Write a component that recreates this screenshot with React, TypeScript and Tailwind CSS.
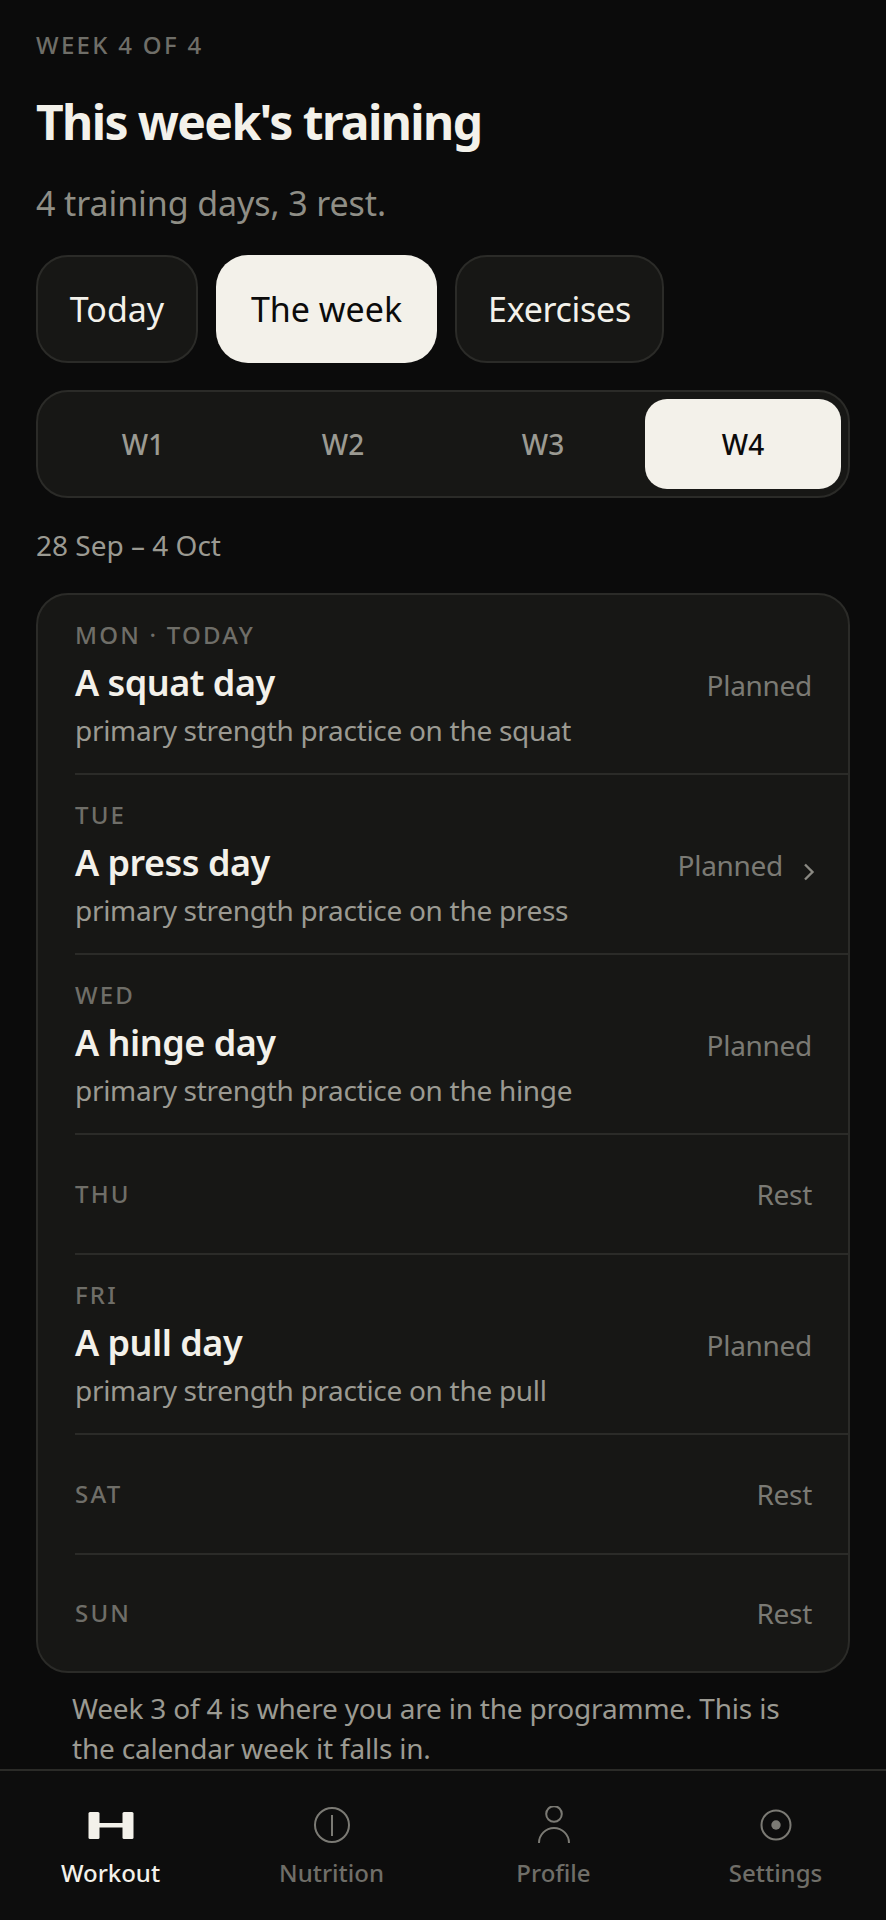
import { ReactNode } from "react";

type Day = { label: string; title?: string; desc?: string; status: string; chevron?: boolean };

const days: Day[] = [
  { label: "MON · TODAY", title: "A squat day", desc: "primary strength practice on the squat", status: "Planned" },
  { label: "TUE", title: "A press day", desc: "primary strength practice on the press", status: "Planned", chevron: true },
  { label: "WED", title: "A hinge day", desc: "primary strength practice on the hinge", status: "Planned" },
  { label: "THU", status: "Rest" },
  { label: "FRI", title: "A pull day", desc: "primary strength practice on the pull", status: "Planned" },
  { label: "SAT", status: "Rest" },
  { label: "SUN", status: "Rest" },
];

const DayRow = ({ day, last }: { day: Day; last: boolean }) => {
  const border = last ? "" : "border-b-2 border-[#2b2b28]";
  if (!day.title) {
    return (
      <div className={`ml-[37px] pr-[36px] flex items-center justify-between ${last ? "h-[116px]" : "h-[120px]"} ${border}`}>
        <span className="text-[24px] tracking-[2.2px] font-medium text-[#6f6e68]">{day.label}</span>
        <span className="text-[28px] tracking-[-0.3px] text-[#7b7a74]">{day.status}</span>
      </div>
    );
  }
  return (
    <div className={`ml-[37px] h-[180px] pr-[36px] pt-[24px] flex items-start justify-between ${border}`}>
      <div>
        <div className="text-[24px] leading-[32px] tracking-[2.2px] font-medium text-[#6f6e68]">{day.label}</div>
        <div className="text-[36px] leading-[48px] mt-[8px] tracking-[-0.5px] font-semibold text-[#f3f1ea]">{day.title}</div>
        <div className="text-[28px] leading-[38px] mt-[4px] tracking-[-0.3px] text-[#9b9a92]">{day.desc}</div>
      </div>
      <div className="flex items-center mt-[47px]">
        <span className="text-[28px] leading-[38px] tracking-[-0.3px] text-[#7b7a74]">{day.status}</span>
        {day.chevron && (
          <svg width="14" height="18" viewBox="0 0 14 18" className="ml-[19px] mr-[-4px] mt-[14px]" fill="none" stroke="#8a8982" strokeWidth="2.4">
            <path d="M3 1.5 L10.5 9 L3 16.5" />
          </svg>
        )}
      </div>
    </div>
  );
};

const NavItem = ({ label, active, icon, wide }: { label: string; active?: boolean; icon: ReactNode; wide?: boolean }) => (
  <div className={`flex flex-col items-center ${wide ? "w-[223px]" : "w-[221px]"}`}>
    <div className="h-[38px] flex items-center justify-center">{icon}</div>
    <span className={`mt-[13px] text-[24px] leading-[32px] font-medium ${active ? "text-[#f3f1ea]" : "text-[#6f6e68]"}`}>{label}</span>
  </div>
);

export default function App() {
  return (
    <div className="h-[1920px] w-[886px] overflow-hidden bg-[#0b0b0b] flex flex-col font-['Noto_Sans',sans-serif]">
      <div className="flex-1 overflow-hidden px-[36px]">
        <div className="mt-[28px] text-[24px] leading-[34px] tracking-[2.3px] font-medium text-[#6f6e68]">WEEK 4 OF 4</div>
        <h1 className="mt-[28px] text-[48px] leading-[64px] tracking-[-1.6px] font-bold text-[#f3f1ea]">This week's training</h1>
        <p className="mt-[27px] text-[34px] leading-[44px] tracking-[-0.1px] text-[#8f8e86]">4 training days, 3 rest.</p>

        <div className="mt-[30px] flex gap-[18px]">
          <button className="h-[108px] w-[162px] rounded-[32px] border-2 border-[#2b2b28] bg-[#171715] text-[34px] text-[#f3f1ea]">Today</button>
          <button className="h-[108px] w-[221px] rounded-[32px] bg-[#f3f1ea] text-[34px] text-[#0b0b0b]">The week</button>
          <button className="h-[108px] w-[209px] rounded-[32px] border-2 border-[#2b2b28] bg-[#171715] text-[34px] tracking-[-0.3px] text-[#f3f1ea]">Exercises</button>
        </div>

        <div className="mt-[27px] h-[108px] rounded-[32px] border-2 border-[#2b2b28] bg-[#171715] p-[7px] grid grid-cols-4 gap-[4px]">
          {["W1", "W2", "W3"].map((w) => (
            <div key={w} className="flex items-center justify-center text-[28px] font-medium text-[#9b9a92]">{w}</div>
          ))}
          <div className="flex items-center justify-center rounded-[22px] bg-[#f3f1ea] text-[28px] font-medium text-[#0b0b0b]">W4</div>
        </div>

        <div className="mt-[28px] text-[28px] leading-[38px] text-[#9b9a92]">28 Sep – 4 Oct</div>

        <div className="mt-[29px] rounded-[32px] border-2 border-[#2b2b28] bg-[#171715] overflow-hidden">
          {days.map((d, i) => (
            <DayRow key={d.label} day={d} last={i === days.length - 1} />
          ))}
        </div>

        <p className="mt-[15px] px-[36px] text-[28px] leading-[40px] tracking-[-0.2px] text-[#9b9a92]">
          Week 3 of 4 is where you are in the programme. This is the calendar week it falls in.
        </p>
      </div>

      <nav className="h-[151px] shrink-0 border-t-2 border-[#2b2b28] bg-[#0d0d0d] flex pt-[35px]">
        <NavItem
          label="Workout"
          active
          icon={
            <svg width="46" height="38" viewBox="0 0 46 38" fill="#f3f1ea">
              <rect x="0.5" y="6" width="11" height="27" rx="1.5" />
              <rect x="34.5" y="6" width="11" height="27" rx="1.5" />
              <rect x="11" y="17" width="24" height="4.5" />
            </svg>
          }
        />
        <NavItem
          label="Nutrition"
          icon={
            <svg width="46" height="38" viewBox="0 0 46 38" fill="none" stroke="#7b7a74" strokeWidth="2">
              <circle cx="23" cy="19" r="17" />
              <path d="M23 9 V30" />
            </svg>
          }
        />
        <NavItem
          label="Profile"
          wide
          icon={
            <svg width="46" height="38" viewBox="0 0 46 38" fill="none" stroke="#7b7a74" strokeWidth="2">
              <circle cx="23" cy="8" r="7.8" />
              <path d="M8 37 A15 15 0 0 1 38 37" />
            </svg>
          }
        />
        <NavItem
          label="Settings"
          icon={
            <svg width="46" height="38" viewBox="0 0 46 38" fill="none" stroke="#7b7a74" strokeWidth="2">
              <circle cx="23" cy="19" r="14.5" />
              <circle cx="23" cy="19" r="4.7" fill="#7b7a74" stroke="none" />
            </svg>
          }
        />
      </nav>
    </div>
  );
}
